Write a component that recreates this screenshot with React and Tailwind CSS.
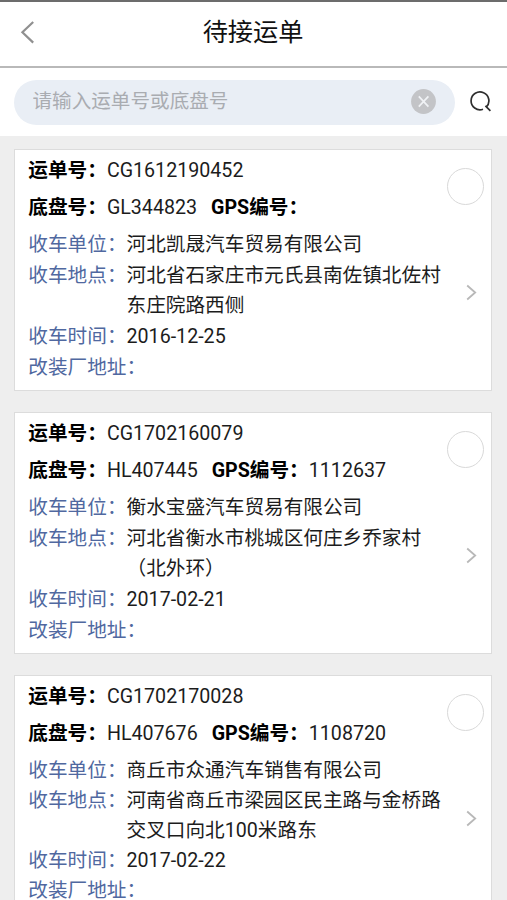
import React, { useState } from "react";

const orders = [
  {
    id: "CG1612190452",
    chassis: "GL344823",
    gps: "",
    company: "河北凯晟汽车贸易有限公司",
    place: ["河北省石家庄市元氏县南佐镇北佐村", "东庄院路西侧"],
    date: "2016-12-25",
    refit: "",
  },
  {
    id: "CG1702160079",
    chassis: "HL407445",
    gps: "1112637",
    company: "衡水宝盛汽车贸易有限公司",
    place: ["河北省衡水市桃城区何庄乡乔家村", "（北外环）"],
    date: "2017-02-21",
    refit: "",
  },
  {
    id: "CG1702170028",
    chassis: "HL407676",
    gps: "1108720",
    company: "商丘市众通汽车销售有限公司",
    place: ["河南省商丘市梁园区民主路与金桥路", "交叉口向北100米路东"],
    date: "2017-02-22",
    refit: "",
    tight: true,
  },
];

const Header = () => (
  <header className="relative flex h-[68px] items-center justify-center border-t-2 border-b-2 border-t-[#6c6c6c] border-b-[#b9b9b9] bg-white pb-[2px] pr-px">
    <button className="absolute left-[20px] top-[18px]">
      <svg width="16" height="24" viewBox="0 0 16 24" fill="none" stroke="#909090" strokeWidth="2.2">
        <path d="M13.2 2 2.4 12.2 13.2 22.6" />
      </svg>
    </button>
    <h1 className="text-[25.2px] leading-[30px] text-[#111]">待接运单</h1>
  </header>
);

const SearchBar = () => {
  const [keyword, setKeyword] = useState("");

  return (
    <div className="flex h-[68px] items-center bg-white pl-[14px]">
      <div className="flex h-[45px] w-[441px] items-center rounded-full bg-[#e9eef5] pl-[18.5px] pr-[19.5px]">
        <input
          className="min-w-0 flex-1 bg-transparent text-[19.6px] leading-[30px] outline-none placeholder:text-[#a9acb1]"
          placeholder="请输入运单号或底盘号"
          value={keyword}
          onChange={(e) => setKeyword(e.target.value)}
        />
        <button className="pb-px" onClick={() => setKeyword("")}>
          <svg width="25" height="25" viewBox="0 0 25 25" fill="none">
            <circle cx="12.5" cy="12.5" r="12.4" fill="#c3c4c7" />
            <path d="m7.8 7.4 9.6 10.2M17.4 7.4 7.8 17.6" stroke="#f0f2f5" strokeWidth="1.7" />
          </svg>
        </button>
      </div>
      <button className="ml-[15px] pb-[2px]">
        <svg width="22" height="22" viewBox="0 0 22 22" fill="none" stroke="#2e2e2e" strokeWidth="1.7">
          <path d="M13 19.2A8.9 8.9 0 1 1 16.2 17.2" />
          <path d="M15.4 15.8 20.4 20.8" />
        </svg>
      </button>
    </div>
  );
};

const Row = ({ label, children }) => (
  <div className="flex">
    <span className="shrink-0 text-[#5068a0]">{label}：</span>
    <div>{children}</div>
  </div>
);

const OrderCard = ({ order }) => {
  const [checked, setChecked] = useState(false);

  return (
    <li className="relative h-[242px] shrink-0 border border-[#dcdcdc] bg-white pl-[13.3px] pt-[3px] text-[19.65px] leading-[30px] text-[#1c1c1c]">
      <p className="h-[37px] leading-[35px]">
        <b className="text-black">运单号：</b>
        {order.id}
      </p>
      <p className="h-10 leading-[35px]">
        <b className="text-black">底盘号：</b>
        {order.chassis}
        <b className="ml-[14px] text-black">GPS编号：</b>
        {order.gps}
      </p>
      <div className={order.tight ? "flex flex-col" : "flex flex-col gap-px"}>
        <Row label="收车单位">{order.company}</Row>
        <Row label="收车地点">
          {order.place.map((line) => (
            <p key={line}>{line}</p>
          ))}
        </Row>
        <Row label="收车时间">{order.date}</Row>
        <Row label="改装厂地址">{order.refit}</Row>
      </div>

      {/* select circle */}
      <button
        onClick={() => setChecked(!checked)}
        className={`absolute right-[7px] top-[18px] size-[37px] rounded-full border ${
          checked ? "border-[#5068a0] bg-[#5068a0]" : "border-[#d9d9d9] bg-white"
        }`}
      ></button>
      <svg
        className="absolute right-[14px] top-[134px]"
        width="11"
        height="17"
        viewBox="0 0 11 17"
        fill="none"
        stroke="#b8b8b8"
        strokeWidth="1.8"
      >
        <path d="M1.2 1.5 9.2 8.5 1.2 15.5" />
      </svg>
    </li>
  );
};

const App = () => {
  return (
    <div className="flex h-[900px] w-full flex-col overflow-hidden bg-[#eeeeee] font-[Roboto,'Noto_Sans_CJK_SC',sans-serif]">
      <Header />
      <SearchBar />
      <ul className="flex min-h-0 flex-1 flex-col gap-[21px] overflow-hidden pl-[14px] pr-[15px] pt-[13px]">
        {orders.map((order) => (
          <OrderCard key={order.id} order={order} />
        ))}
      </ul>
    </div>
  );
};

export default App;
